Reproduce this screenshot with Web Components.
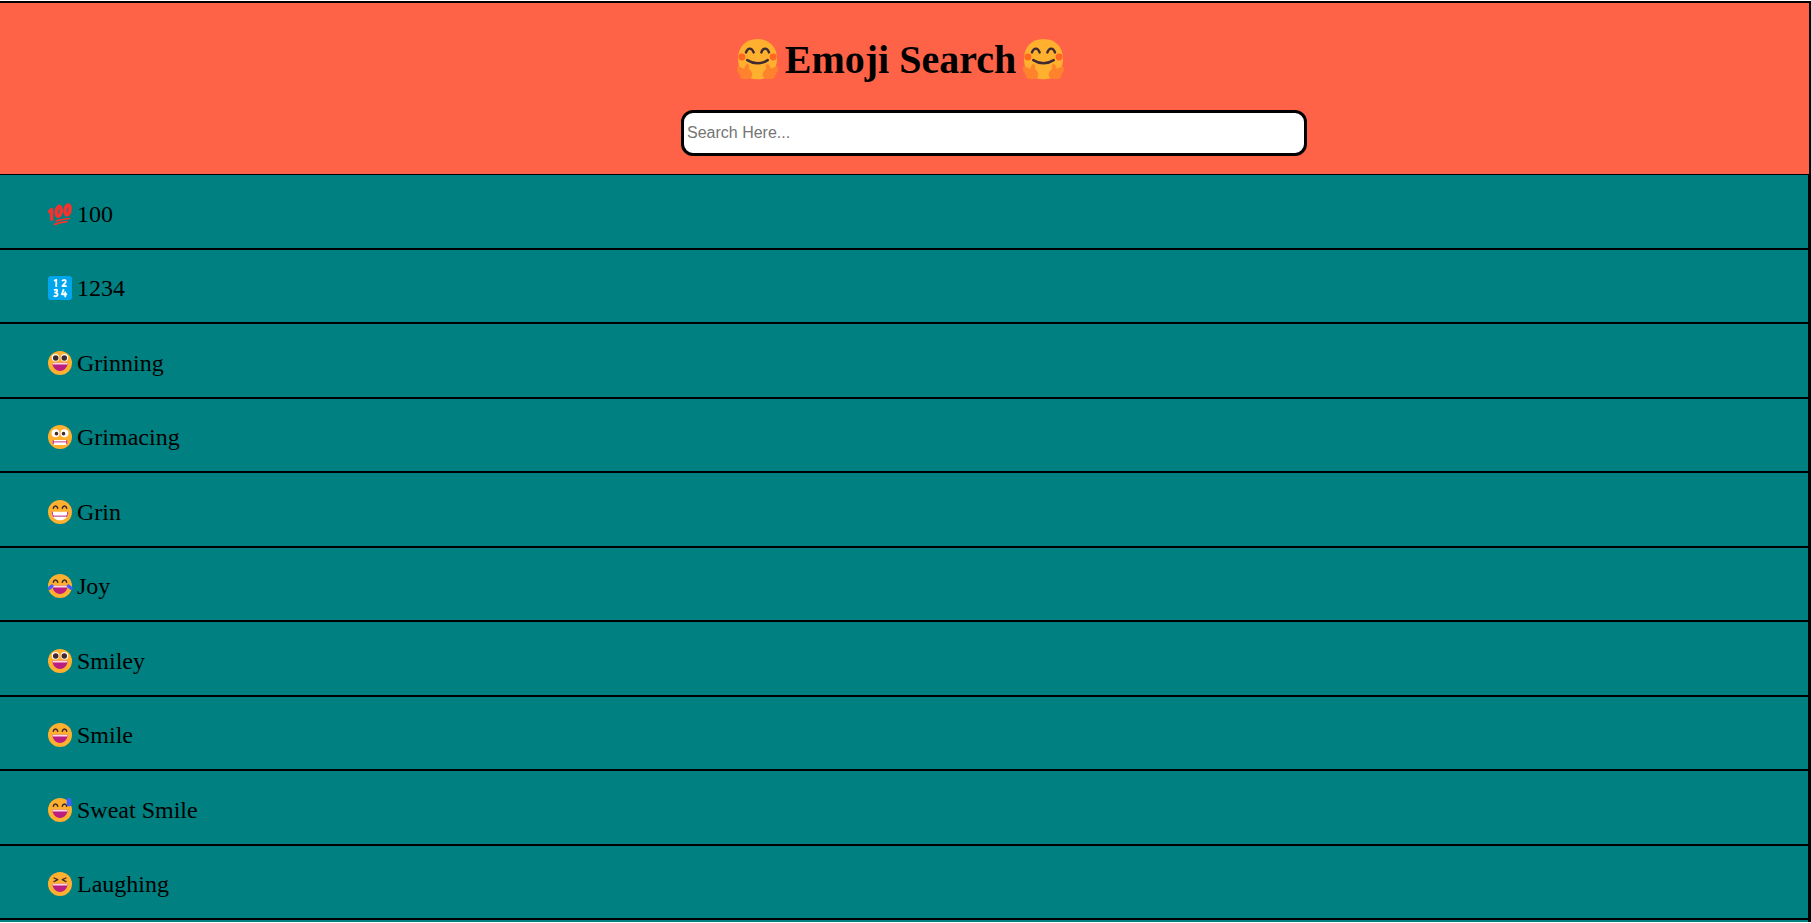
<!DOCTYPE html>
<html lang="en">
<head>
<meta charset="utf-8">
<meta name="viewport" content="width=device-width, initial-scale=1">
<title>Emoji Search</title>
<style>
  body { margin: 0; background: #fff; color: #000; font-family: "Liberation Serif", "Times New Roman", serif; }
</style>
</head>
<body>
<emoji-app></emoji-app>
<script>
const eyes = {
  round: '<circle cx="10" cy="9" r="5" fill="#fff"/><circle cx="22" cy="9" r="5" fill="#fff"/><circle cx="10.3" cy="9.3" r="3.7" fill="#402a32"/><circle cx="21.7" cy="9.3" r="3.7" fill="#402a32"/>',
  small: '<circle cx="10" cy="11" r="5.3" fill="#fff"/><circle cx="22" cy="11" r="5.3" fill="#fff"/><circle cx="11.3" cy="11.5" r="2.4" fill="#402a32"/><circle cx="20.7" cy="11.5" r="2.4" fill="#402a32"/>',
  arc: '<path d="M7 11C8 6.800 12 6.800 13 11M19 11C20 6.800 24 6.800 25 11" fill="none" stroke="#402a32" stroke-width="2" stroke-linecap="round"/>',
  squint: '<path d="M8 8l5 2.3-5 2.4M24 8l-5 2.3 5 2.4" fill="none" stroke="#402a32" stroke-width="1.8" stroke-linecap="round" stroke-linejoin="round"/>'
};
const face = '<circle cx="16" cy="16" r="16" fill="#ffb02e"/>';
const laugh = '<path d="M6 15.500h20c0 6-4 11-10 11S6 21.500 6 15.500z" fill="#bb1d80"/><path d="M6 15.500h20l-.4 2.500H6.400z" fill="#fcd8e4"/>';
const hand = 'M11.5 29.5C10 32 6 31.500 3.500 30.800 2 30.300 2 29 3 28.600 1.300 28.200.8 27 1.500 26.300-.2 25.500-.4 24.200.5 23.500-.5 22.500 0 21.200 1.600 21.500L5.500 23.200 6.800 20.500C7.800 18.800 9.800 19.600 9.500 21.500L9.200 23.200C11.200 24.800 12.800 27.200 11.500 29.500z';
const glyphs = {
  hugging: '<path d="M16 0C6 0 .8 7 .8 15c0 12 7.200 16.500 15.200 16.500S31.200 27 31.200 15C31.200 7 26 0 16 0z" fill="#ffb02e"/>'
    + '<circle cx="3.800" cy="14" r="2.700" fill="#ff6723"/><circle cx="28.200" cy="14" r="2.700" fill="#ff6723"/>'
    + '<path d="M7 10.500C8.300 6.500 11.700 6.500 13 10.500M19 10.500C20.300 6.500 23.700 6.500 25 10.500M8 16.500Q16 21.500 24 16.500" fill="none" stroke="#402a32" stroke-width="1.900" stroke-linecap="round"/>'
    + `<path d="${hand}" fill="#ff822d"/><path transform="matrix(-1 0 0 1 32 0)" d="${hand}" fill="#ff822d"/>`,
  hundred: '<g fill="none" stroke="#f8312f" stroke-linecap="round" stroke-linejoin="round"><path d="M2 13L4.800 10 5 23" stroke-width="4.400"/><ellipse cx="14.300" cy="12.500" rx="3.200" ry="6.600" transform="rotate(8 14.300 12.500)" stroke-width="4.700"/><ellipse cx="26.200" cy="10.500" rx="3.200" ry="6.600" transform="rotate(8 26.200 10.500)" stroke-width="4.700"/><path d="M11 25.200Q18 23 28.500 22M8.500 29.800Q16 27.200 25 26.200" stroke-width="2.300"/></g>',
  numbers: '<rect width="32" height="32" rx="4" fill="#00a6ed"/><g fill="none" stroke="#fff" stroke-width="2.400" stroke-linejoin="round"><path d="M8 6.500L11 5v9.500"/><path d="M18.800 6.800Q20 4.800 22.300 5.200 24.500 6 23.200 8.800L19.200 13.500H25"/><path d="M8 18.800Q12.500 17 12.200 20 12 22 9.500 22.300 13 22.500 12.800 25 12 28 7.500 26.500"/><path d="M21 17.500L18.500 24.300H25.500M23 20.500V28.300"/></g>',
  grinning: face + eyes.round + laugh,
  grimacing: face + eyes.small + '<rect x="7" y="20" width="18" height="6.500" rx="1.500" fill="#fff"/><path d="M7 20.300v5.200M25 20.300v5.200M7 22.500h18" stroke="#bb1d80" stroke-width="1.200"/>',
  grin: face + eyes.arc + '<path d="M5 15.500h22c0 7-4.500 11.500-11 11.500S5 22.500 5 15.500z" fill="#fff"/><path d="M5.600 15.500q0 4 1.600 6.500M26.400 15.500q0 4-1.600 6.500M6.800 21.500h18.400" fill="none" stroke="#bb1d80" stroke-width="1.300"/>',
  joy: face + eyes.arc + laugh + '<path d="M1.800 19L5.200 16M30.800 19L27.200 16" stroke="#3f5fff" stroke-width="4.600" stroke-linecap="round"/>',
  smile: face + eyes.arc + laugh,
  sweat: face + eyes.arc + laugh + '<rect x="25" y="0" width="6" height="11" rx="2.500" fill="#3f5fff"/>',
  laughing: face + eyes.squint + laugh
};

class EmojiIcon extends HTMLElement {
  connectedCallback() {
    this.attachShadow({ mode: 'open' }).innerHTML = `
      <style>
        :host { display: inline-block; flex: none; width: 1em; height: 1em; }
        svg { display: block; width: 100%; height: 100%; overflow: visible; }
      </style>
      <svg viewBox="0 0 32 32" aria-hidden="true">${glyphs[this.getAttribute('name')]}</svg>`;
  }
}

class EmojiHeader extends HTMLElement {
  connectedCallback() {
    this.attachShadow({ mode: 'open' }).innerHTML = `
      <style>
        :host { display: block; background: tomato; padding: 31px 0 18px; }
        h1 { display: flex; justify-content: center; align-items: center; gap: 7px; margin: 0 8px 25px 0; font-size: 40px; line-height: 51px; }
        emoji-icon { width: 41px; height: 41px; }
        form { display: flex; justify-content: center; margin: 0; }
        input { box-sizing: border-box; width: 626px; min-width: 0; height: 46px; margin: 0 0 0 179px; padding: 1px 3px; border: 3px solid #000; border-radius: 12px; background: #fff; font: 16px "Liberation Sans", Arial, sans-serif; }
        input::placeholder { color: #757575; }
      </style>
      <h1><emoji-icon name="hugging"></emoji-icon><span><slot></slot></span><emoji-icon name="hugging"></emoji-icon></h1>
      <form role="search"><input type="text" aria-label="Search emoji" placeholder="Search Here..."></form>`;
    const input = this.shadowRoot.querySelector('input');
    input.addEventListener('input', () => this.dispatchEvent(new CustomEvent('filter', { detail: input.value })));
    this.shadowRoot.querySelector('form').addEventListener('submit', e => e.preventDefault());
  }
}

class EmojiRow extends HTMLElement {
  connectedCallback() {
    this.attachShadow({ mode: 'open' }).innerHTML = `
      <style>
        :host { box-sizing: border-box; display: flex; align-items: center; gap: 5px; padding: 5px 48px 0; border-bottom: 2px solid #000; font-size: 24px; line-height: 28px; }
        :host([hidden]) { display: none; }
      </style>
      <emoji-icon name="${this.getAttribute('icon')}"></emoji-icon><span><slot></slot></span>`;
  }
}

class EmojiApp extends HTMLElement {
  connectedCallback() {
    this.attachShadow({ mode: 'open' }).innerHTML = `
      <style>
        :host { box-sizing: border-box; display: flex; flex-direction: column; min-height: 100vh; padding: 1px 0; }
        main { flex: 1; display: flex; flex-direction: column; border: solid #000; border-width: 2px 2px 0 0; }
        section { flex: 1; display: grid; grid-auto-rows: minmax(60px, 1fr); background: teal; border: solid #000; border-width: 1px 1px 0 0; padding-bottom: 2px; }
      </style>
      <main>
        <emoji-header>Emoji Search</emoji-header>
        <section role="list">
          <emoji-row role="listitem" icon="hundred">100</emoji-row>
          <emoji-row role="listitem" icon="numbers">1234</emoji-row>
          <emoji-row role="listitem" icon="grinning">Grinning</emoji-row>
          <emoji-row role="listitem" icon="grimacing">Grimacing</emoji-row>
          <emoji-row role="listitem" icon="grin">Grin</emoji-row>
          <emoji-row role="listitem" icon="joy">Joy</emoji-row>
          <emoji-row role="listitem" icon="grinning">Smiley</emoji-row>
          <emoji-row role="listitem" icon="smile">Smile</emoji-row>
          <emoji-row role="listitem" icon="sweat">Sweat Smile</emoji-row>
          <emoji-row role="listitem" icon="laughing">Laughing</emoji-row>
        </section>
      </main>`;
    const rows = this.shadowRoot.querySelectorAll('emoji-row');
    this.shadowRoot.querySelector('emoji-header').addEventListener('filter', e => {
      const query = e.detail.toLowerCase();
      rows.forEach(row => { row.hidden = !row.textContent.toLowerCase().includes(query); });
    });
  }
}

customElements.define('emoji-icon', EmojiIcon);
customElements.define('emoji-header', EmojiHeader);
customElements.define('emoji-row', EmojiRow);
customElements.define('emoji-app', EmojiApp);
</script>
</body>
</html>
